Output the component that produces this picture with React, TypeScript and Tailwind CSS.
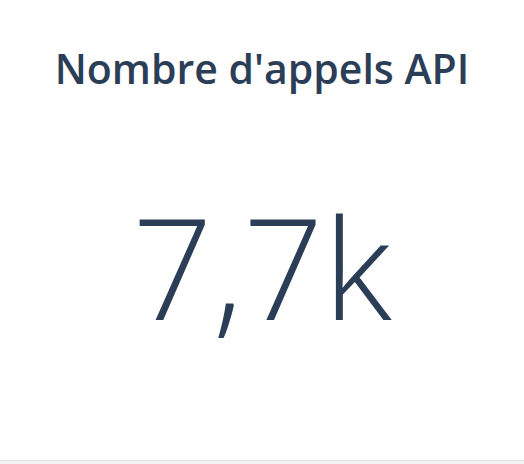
export default function App() {
  return (
    <div className="min-h-[464px] w-[524px] bg-[#f3f3f3]">
      {/* Card */}
      <div
        className="flex h-[461px] flex-col items-center border-b border-[#e0e0e0] bg-white pt-[48px] text-[#2c3e57]"
        style={{ fontFamily: '"Open Sans", "Liberation Sans", sans-serif' }}
      >
        <h2 className="text-[41px] font-semibold leading-none">
          Nombre d'appels API
        </h2>

        <p className="mt-[106px] text-[141px] font-light leading-none">
          7,7k
        </p>
      </div>
    </div>
  );
}
